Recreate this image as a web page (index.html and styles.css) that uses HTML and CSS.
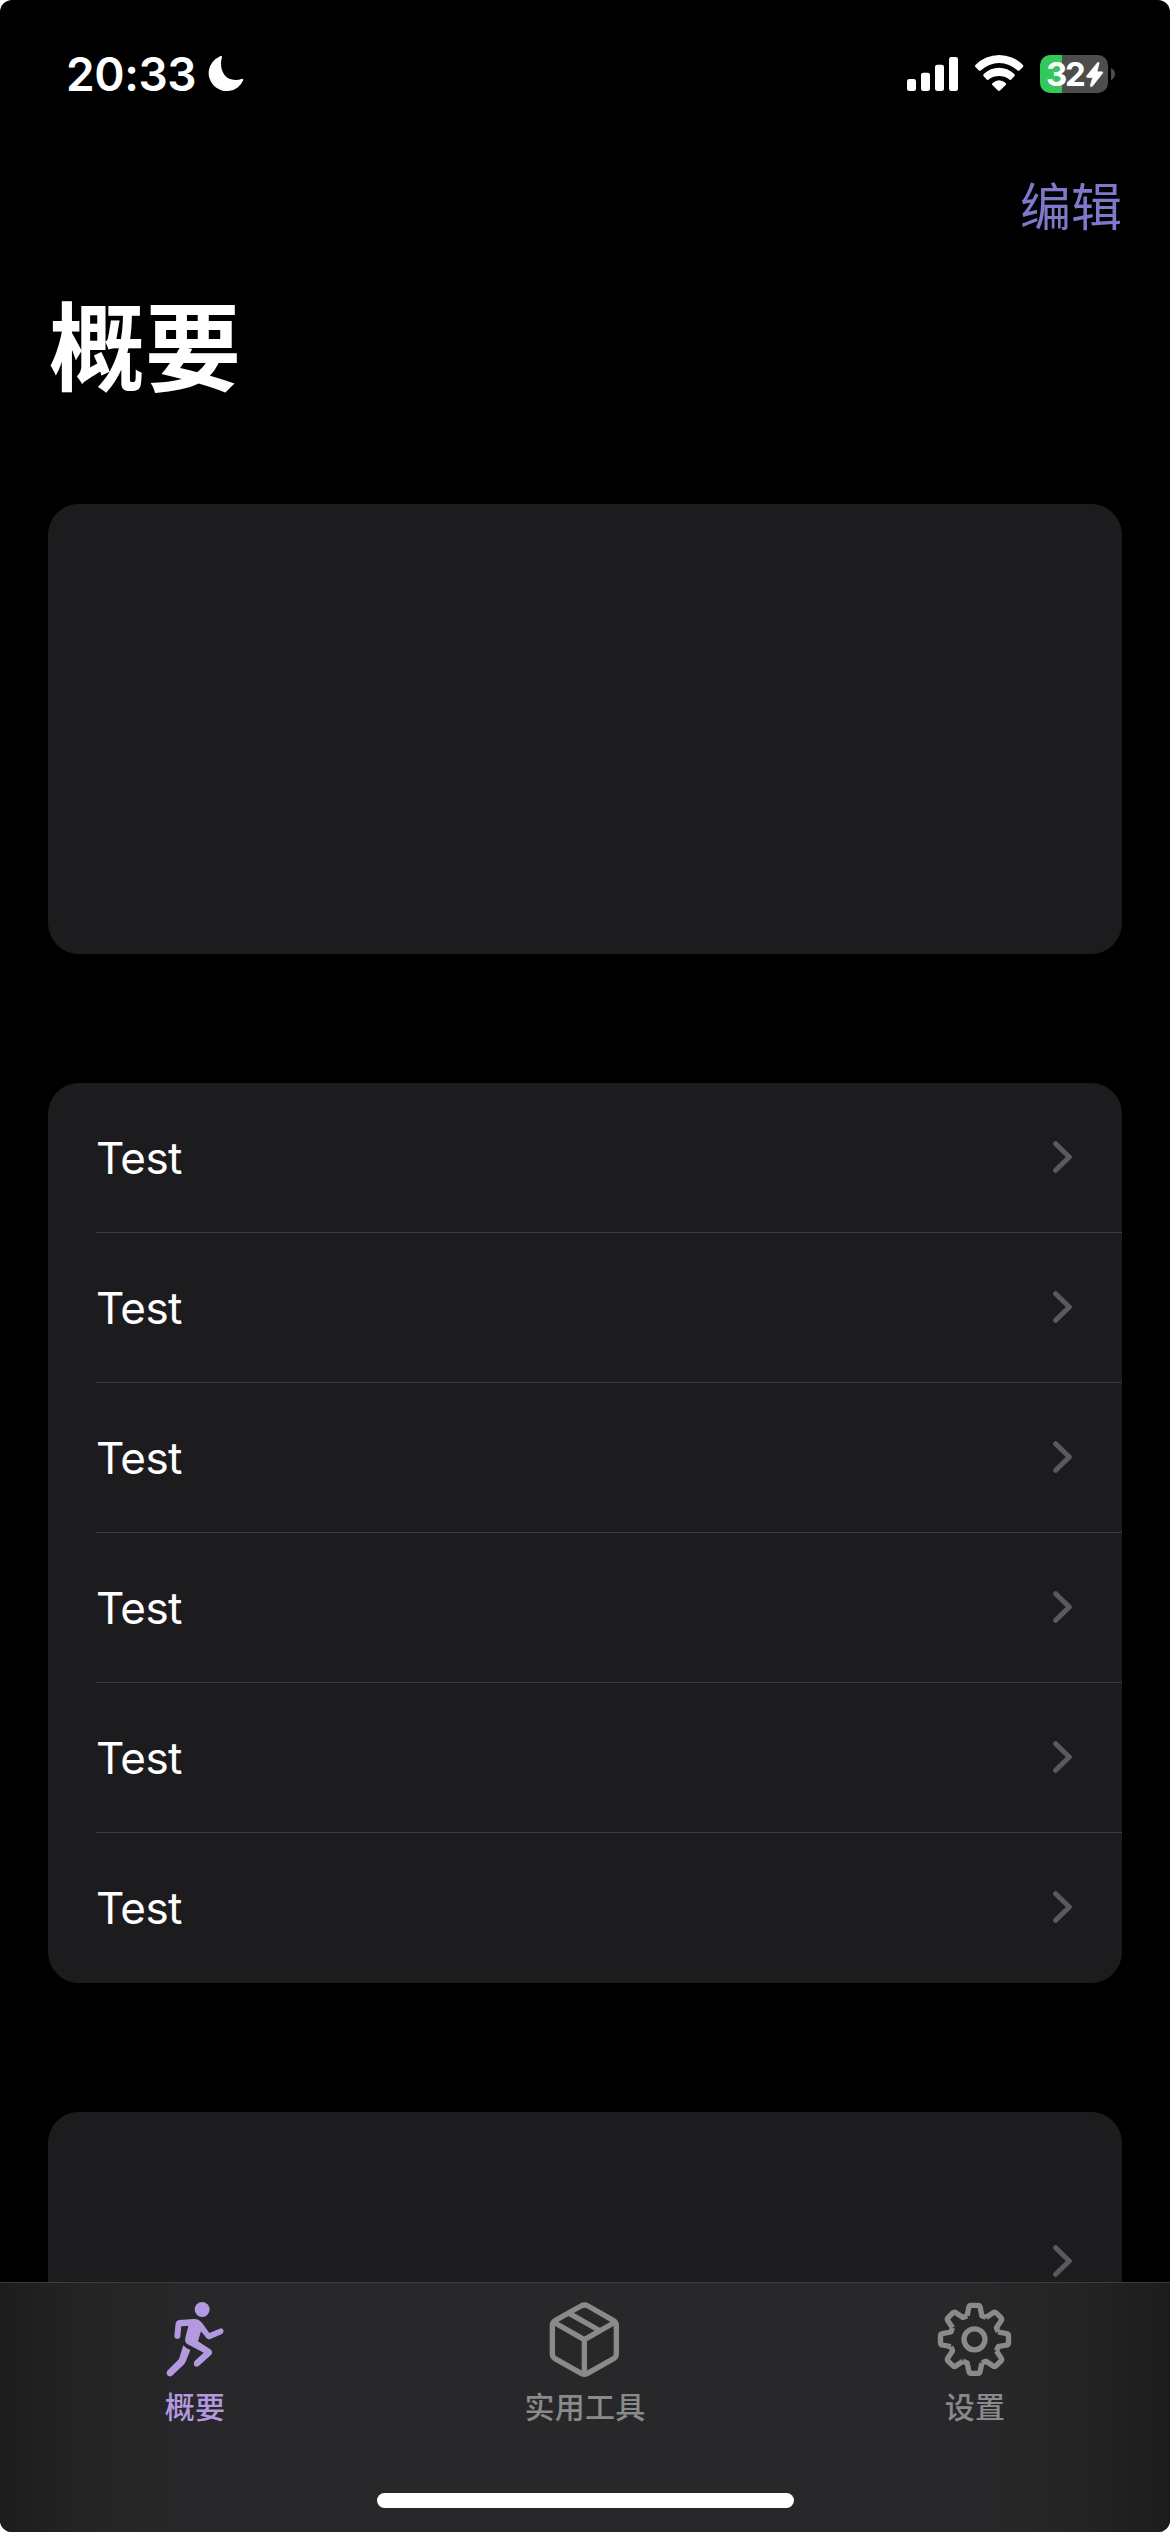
FILE: index.html
```html
<!DOCTYPE html>
<html lang="zh-CN">
<head>
<meta charset="utf-8">
<title>概要</title>
<link rel="stylesheet" href="styles.css">
</head>
<body>
<svg class="defs" aria-hidden="true">
  <symbol id="chevron" viewBox="0 0 57 96"><path d="M8 8 L49 48 L8 88"/></symbol>
</svg>
<div class="screen">
  <header class="status">
    <div class="clock">
      <span class="time">20:33</span>
      <svg class="moon" viewBox="624 168 108 108"><path d="M658 170 Q665 165 666 171 C656 206 672 240 706 240 Q718 240 726 236 Q731 236 729 242 A54 54 0 1 1 658 170Z"/></svg>
    </div>
    <div class="indicators">
      <svg class="signal" viewBox="81 75 153 108"><rect x="81" y="147" width="27" height="36" rx="7"/><rect x="123" y="128" width="27" height="55" rx="7"/><rect x="165" y="104" width="27" height="79" rx="7"/><rect x="207" y="81" width="27" height="102" rx="7"/></svg>
      <svg class="wifi" viewBox="285 75 144 108"><path d="M287 104 A100 100 0 0 1 428 104 Q432 108 428 112 L419 121 Q416 124 412 121 A78.500 78.500 0 0 0 303 121 Q299 124 296 121 L287 112 Q283 108 287 104Z"/><path d="M312 131 A65 65 0 0 1 402 131 Q407 135 403 139 L393 149 Q390 151 387 148 A50 50 0 0 0 327 148 Q324 151 321 149 L311 139 Q307 135 312 131Z"/><path d="M338 159 Q357 143 377 159 Q380 162 377 165 L361 181 Q357 185 353 181 L337 165 Q334 162 338 159Z"/></svg>
      <div class="battery">
        <div class="battery-body">
          <span class="battery-level">32</span>
          <svg class="bolt" viewBox="618 98 51 74"><path d="M653 99 Q658 97 657 102 L651 127 L666 127 Q671 128 667 132 L637 170 Q631 174 631 168 L638 144 L622 144 Q617 143 621 138Z"/></svg>
        </div>
        <svg class="battery-cap" viewBox="0 0 12 36"><path d="M0 0 Q12 6 12 18 Q12 30 0 36Z"/></svg>
      </div>
    </div>
  </header>

  <nav class="navbar"><a class="edit">编辑</a></nav>
  <h1 class="title">概要</h1>

  <main class="content">
    <section class="card card-blank"></section>
    <section class="card">
      <div class="row"><span>Test</span><svg class="chevron"><use href="#chevron"/></svg></div>
      <div class="row"><span>Test</span><svg class="chevron"><use href="#chevron"/></svg></div>
      <div class="row"><span>Test</span><svg class="chevron"><use href="#chevron"/></svg></div>
      <div class="row"><span>Test</span><svg class="chevron"><use href="#chevron"/></svg></div>
      <div class="row"><span>Test</span><svg class="chevron"><use href="#chevron"/></svg></div>
      <div class="row"><span>Test</span><svg class="chevron"><use href="#chevron"/></svg></div>
    </section>
    <section class="card card-tall">
      <div class="row row-tall"><span></span><svg class="chevron"><use href="#chevron"/></svg></div>
    </section>
  </main>

  <footer class="tabbar">
    <div class="tabs">
      <a class="tab tab-active">
        <svg class="icon icon-run" viewBox="105 90 180 234">
          <circle cx="216.500" cy="118.500" r="22.500"/>
          <path d="M147 150 L190 147 Q207 146 217 160 L238 189 L269 176 Q277 173 280 180 Q283 187 276 192 L241 207 Q235 210 230 205 L213 184 L204 214 L241 238 Q251 246 242 256 L206 288 Q199 293 193 287 Q188 280 194 273 L221 248 L173 223 Q163 216 166 203 L175 168 L154 169 L151 200 Q149 207 141 207 Q133 206 133 199 L137 159 Q139 151 147 150Z"/>
          <path d="M160 226 Q168 236 181 240 L167 275 Q165 280 161 284 L126 317 Q119 322 112 316 Q107 309 112 302 L147 267 Z"/>
        </svg>
        <span class="tab-label">概要</span>
      </a>
      <a class="tab">
        <svg class="icon icon-box" viewBox="147 90 216 234">
          <path d="M243 108 Q253 102 264 108 L341 152 Q349 157 349 166 L349 252 Q349 261 341 266 L261 311 Q253 315 245 311 L165 266 Q157 261 157 252 L157 166 Q157 157 165 152Z"/>
          <path d="M160 156 L253 209 L346 156 M253 209 V312 M209 131 L301 183"/>
        </svg>
        <span class="tab-label">实用工具</span>
      </a>
      <a class="tab">
        <svg class="icon icon-gear" viewBox="108 210 234 234">
          <defs><path id="tooth" d="M-22 -71 L-17 -96 Q-16 -102 -10 -102 L10 -102 Q16 -102 17 -96 L22 -71 L34.600 -65.800"/></defs>
          <g transform="translate(223.500 328)">
            <circle r="31.500"/>
            <use href="#tooth"/><use href="#tooth" transform="rotate(45)"/><use href="#tooth" transform="rotate(90)"/><use href="#tooth" transform="rotate(135)"/><use href="#tooth" transform="rotate(180)"/><use href="#tooth" transform="rotate(225)"/><use href="#tooth" transform="rotate(270)"/><use href="#tooth" transform="rotate(315)"/>
          </g>
        </svg>
        <span class="tab-label">设置</span>
      </a>
    </div>
    <div class="home-indicator"></div>
  </footer>
</div>
</body>
</html>
```
FILE: styles.css
```css
* { box-sizing: border-box; }
body {
  margin: 0;
  background: #fff;
  font-family: Inter, "Noto Sans CJK SC", sans-serif;
  color: #fff;
}
.defs { display: none; }
.screen {
  position: relative;
  width: 1170px;
  height: 2532px;
  overflow: hidden;
  background: #000;
  border-radius: 12px;
}
.status {
  height: 141px;
  padding: 55px 55px 0 66px;
  display: flex;
  justify-content: space-between;
  align-items: flex-start;
}
.clock { display: flex; align-items: flex-start; }
.time {
  width: 142px;
  font-size: 46px;
  line-height: 38px;
  font-weight: 600;
  letter-spacing: -0.4px;
  white-space: nowrap;
}
.moon { width: 36px; height: 36px; margin-top: 1px; fill: #fff; }
.indicators { display: flex; align-items: flex-start; }
.signal { width: 51px; height: 36px; fill: #fff; margin-right: 17px; }
.wifi { width: 48px; height: 36px; fill: #fff; overflow: visible; margin-right: 17px; }
.battery { display: flex; align-items: center; gap: 3px; }
.battery-body {
  width: 68px;
  height: 38px;
  padding-left: 6px;
  border-radius: 10px;
  background: linear-gradient(90deg, #34c759 22px, #4d4d4d 22px);
  display: flex;
  align-items: center;
}
.battery-level {
  width: 40px;
  font-size: 33px;
  line-height: 38px;
  font-weight: 700;
  letter-spacing: -2.4px;
}
.bolt {
  width: 17px;
  height: 25px;
  fill: #fff;
  stroke: #fff;
  stroke-width: 2px;
  margin-top: 1px;
  overflow: visible;
}
.battery-cap { width: 4px; height: 12px; fill: #4d4d4d; }

.navbar {
  height: 132px;
  padding: 2px 48px 0;
  display: flex;
  justify-content: flex-end;
  align-items: center;
}
.edit { font-size: 51px; line-height: 60px; color: #7f78cb; letter-spacing: 0; }
.title {
  margin: 0;
  height: 231px;
  padding: 27px 49px 0;
  font-size: 96px;
  line-height: 96px;
  font-weight: 700;
}

.content { padding: 0 48px; display: flex; flex-direction: column; gap: 129px; }
.card {
  border-radius: 31px;
  background: #1c1c1e;
  overflow: hidden;
}
.card-blank { height: 450px; }
.card-tall { height: 300px; }
.row {
  height: 150px;
  margin-left: 48px;
  padding-right: 50px;
  border-bottom: 1px solid #3b3b3d;
  display: flex;
  justify-content: space-between;
  align-items: center;
  font-size: 44px;
  letter-spacing: -0.6px;
}
.row:last-child { border-bottom-color: transparent; }
.row-tall { height: 300px; }
.chevron {
  width: 19px;
  height: 32px;
  margin-bottom: 2px;
  fill: none;
  stroke: #5a5a5e;
  stroke-width: 15px;
  stroke-linecap: round;
  stroke-linejoin: round;
}

.tabbar {
  position: absolute;
  left: 0;
  right: 0;
  bottom: 0;
  height: 250px;
  border-top: 1px solid #3d3d3f;
  background: linear-gradient(90deg, #1c1c1d 0, #242425 80px, #28282a 200px, #28282a 970px, #242425 1080px, #1c1c1c 1170px);
  display: flex;
  flex-direction: column;
  align-items: center;
  justify-content: space-between;
  padding: 17px 0 24px;
}
.tabs { width: 1170px; display: grid; grid-template-columns: repeat(3, 1fr); }
.tab {
  display: flex;
  flex-direction: column;
  align-items: center;
  gap: 8px;
  color: #8a8a8b;
}
.tab-active { color: #b399df; }
.icon { height: 78px; fill: none; stroke: currentColor; stroke-width: 16px; stroke-linejoin: round; }
.icon-run { width: 60px; fill: currentColor; stroke: none; }
.icon-box { width: 72px; }
.icon-gear { width: 78px; }
.tab-label { font-size: 30px; line-height: 42px; font-weight: 500; letter-spacing: 0.3px; }
.home-indicator { width: 417px; height: 15px; border-radius: 8px; background: #fff; }
```
